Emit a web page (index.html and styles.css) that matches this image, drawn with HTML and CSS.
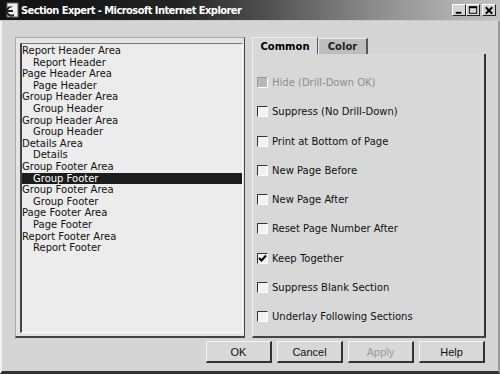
FILE: index.html
```html
<!DOCTYPE html>
<html>
<head>
<meta charset="utf-8">
<link rel="stylesheet" href="styles.css">
</head>
<body>
<div class="window">
  <div class="titlebar">
    <svg class="appicon" width="16" height="16" viewBox="0 0 16 16">
      <rect x="3" y="1" width="11" height="14" fill="#eee" stroke="#666" stroke-width="1"/>
      <path d="M2 9 C2 5 6 3 9 5 C7 5 5 6 4 8 L9 8 L9 10 L4 10 C5 13 8 13 10 12 L10 14 C6 16 2 13 2 9 Z" fill="#222"/>
    </svg>
    <span class="title">Section Expert - Microsoft Internet Explorer</span>
    <div class="winbtns">
      <span class="wb"><svg width="13" height="11" viewBox="0 0 13 11"><rect x="3" y="7" width="6" height="2" fill="#000"/></svg></span>
      <span class="wb"><svg width="13" height="11" viewBox="0 0 13 11"><rect x="2.5" y="1.5" width="8" height="7" fill="none" stroke="#000"/><rect x="2" y="1" width="9" height="2" fill="#000"/></svg></span>
      <span class="wb close"><svg width="13" height="11" viewBox="0 0 13 11"><path d="M3 2 L10 9 M10 2 L3 9" stroke="#000" stroke-width="2"/></svg></span>
    </div>
  </div>
  <div class="body">
    <div class="main">
      <div class="listframe">
        <ul class="list">
          <li>Report Header Area</li>
          <li class="sub">Report Header</li>
          <li>Page Header Area</li>
          <li class="sub">Page Header</li>
          <li>Group Header Area</li>
          <li class="sub">Group Header</li>
          <li>Group Header Area</li>
          <li class="sub">Group Header</li>
          <li>Details Area</li>
          <li class="sub">Details</li>
          <li>Group Footer Area</li>
          <li class="sub selected">Group Footer</li>
          <li>Group Footer Area</li>
          <li class="sub">Group Footer</li>
          <li>Page Footer Area</li>
          <li class="sub">Page Footer</li>
          <li>Report Footer Area</li>
          <li class="sub">Report Footer</li>
        </ul>
      </div>
      <div class="tabs">
        <div class="tabstrip">
          <span class="tab active">Common</span>
          <span class="tab">Color</span>
        </div>
        <div class="panel">
          <label class="opt disabled"><span class="cb dis"></span>Hide (Drill-Down OK)</label>
          <label class="opt"><span class="cb"></span>Suppress (No Drill-Down)</label>
          <label class="opt"><span class="cb"></span>Print at Bottom of Page</label>
          <label class="opt"><span class="cb"></span>New Page Before</label>
          <label class="opt"><span class="cb"></span>New Page After</label>
          <label class="opt"><span class="cb"></span>Reset Page Number After</label>
          <label class="opt"><span class="cb"><svg width="9" height="9" viewBox="0 0 9 9"><path d="M1 4 L3.5 6.5 L8 1.5" fill="none" stroke="#000" stroke-width="2"/></svg></span>Keep Together</label>
          <label class="opt"><span class="cb"></span>Suppress Blank Section</label>
          <label class="opt"><span class="cb"></span>Underlay Following Sections</label>
        </div>
      </div>
    </div>
    <div class="buttons">
      <span class="btn">OK</span>
      <span class="btn">Cancel</span>
      <span class="btn disabled">Apply</span>
      <span class="btn">Help</span>
    </div>
  </div>
</div>
</body>
</html>
```
FILE: styles.css
```css
* { box-sizing: border-box; }
html, body { margin: 0; padding: 0; }
body {
  width: 500px;
  height: 374px;
  overflow: hidden;
  background: #d5d5d5;
  font-family: "DejaVu Sans", Verdana, sans-serif;
  font-size: 10px;
  color: #111;
}
.window {
  width: 500px;
  height: 374px;
  display: flex;
  flex-direction: column;
  background: #d5d5d5;
  border-left: 2px solid #f2f2f2;
  border-right: 2px solid #9a9a9a;
  border-bottom: 3px solid #333;
}
.titlebar {
  height: 21px;
  margin-left: -2px;
  margin-right: -2px;
  display: flex;
  align-items: center;
  padding: 0 4px 0 4px;
  background: linear-gradient(to right, #111 0%, #222 35%, #555 55%, #8c8c8c 75%, #c4c4c4 100%);
  border-bottom: 1px solid #c8c8c8;
}
.appicon { flex: none; margin-right: 1px; }
.title {
  color: #fff;
  font-family: "DejaVu Sans Condensed", "DejaVu Sans", sans-serif;
  font-weight: bold;
  font-size: 11px;
  letter-spacing: -0.55px;
  flex: 1;
}
.winbtns { display: flex; gap: 0; align-items: center; }
.wb {
  width: 14px;
  height: 12px;
  background: #d5d5d5;
  border-top: 1px solid #fff;
  border-left: 1px solid #fff;
  border-right: 1px solid #222;
  border-bottom: 1px solid #222;
  display: flex;
  align-items: center;
  justify-content: center;
}
.wb svg { display: block; }
.wb.close { margin-left: 2px; }
.body {
  flex: 1;
  display: flex;
  flex-direction: column;
  padding: 16px 13px 4px 13px;
}
.main {
  display: flex;
  gap: 7px;
  height: 301px;
}
.listframe {
  width: 230px;
  border-top: 1px solid #aaa;
  border-left: 1px solid #aaa;
  border-right: 1px solid #444;
  border-bottom: 2px solid #444;
  background: #e4e4e4;
  padding: 5px 1px 3px 4px;
}
.list {
  list-style: none;
  margin: 0;
  padding: 1px 0 0 0;
  height: 100%;
  background: #ececec;
  border-left: 2px solid #444;
  border-top: 1px solid #777;
  border-right: 1px solid #fff;
  border-bottom: 1px solid #fff;
}
.list li {
  height: 11.6px;
  line-height: 11.6px;
  white-space: nowrap;
  padding-left: 0;
  color: #111;
}
.list li.sub { padding-left: 11px; }
.list li.selected { background: #1c1c1c; color: #fff; }
.tabs {
  flex: 1;
  display: flex;
  flex-direction: column;
  margin-right: -1px;
}
.tabstrip {
  display: flex;
  height: 17px;
  align-items: flex-end;
}
.tab {
  height: 16px;
  display: flex;
  align-items: center;
  justify-content: center;
  font-size: 10px;
  background: #bdbdbd;
  border-top: 1px solid #eee;
  border-left: 1px solid #eee;
  border-right: 2px solid #555;
  width: 50px;
  color: #222;
  font-weight: bold;
}
.tab.active {
  height: 17px;
  width: 66px;
  background: #d8d8d8;
  color: #000;
  border-right: 1px solid #555;
}
.panel {
  flex: 1;
  background: #d8d8d8;
  border-left: 1px solid #f0f0f0;
  border-right: 2px solid #333;
  border-bottom: 2px solid #444;
  display: flex;
  flex-direction: column;
  padding: 14px 0 0 4px;
}
.opt {
  height: 29.25px;
  display: flex;
  align-items: center;
  font-size: 10px;
  color: #111;
  white-space: nowrap;
  flex: none;
}
.opt.disabled { color: #8e8e8e; }
.cb {
  width: 11px;
  height: 11px;
  margin-right: 4px;
  background: #f2f2f2;
  border-top: 1px solid #333;
  border-left: 1px solid #333;
  border-right: 1px solid #fff;
  border-bottom: 1px solid #fff;
  display: flex;
  align-items: center;
  justify-content: center;
  flex: none;
}
.cb.dis { background: #b8b8b8; border-top-color: #999; border-left-color: #999; }
.cb svg { display: block; }
.buttons {
  display: flex;
  justify-content: flex-end;
  gap: 5px;
  margin-top: 3px;
  margin-right: 0;
}
.btn {
  width: 66px;
  height: 22px;
  display: flex;
  align-items: center;
  justify-content: center;
  font-family: "Liberation Sans", Arial, sans-serif;
  font-size: 11px;
  background: #d8d8d8;
  border-top: 1px solid #f4f4f4;
  border-left: 1px solid #f4f4f4;
  border-right: 2px solid #333;
  border-bottom: 2px solid #333;
  color: #111;
}
.btn.disabled { color: #9a9a9a; }
```
